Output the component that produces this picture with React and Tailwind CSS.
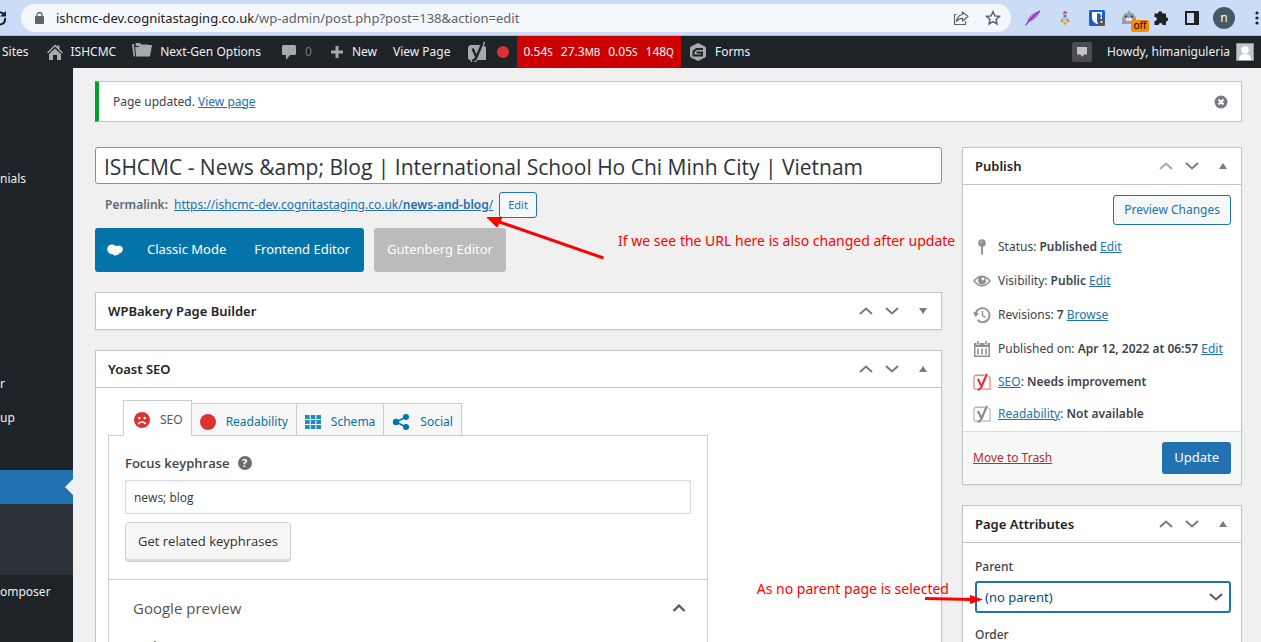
import React from "react";

const SANS = "font-['Noto_Sans',sans-serif]";
const OPEN = "font-['Open_Sans','Noto_Sans',sans-serif]";

function Chevron({ up, className = "" }) {
  return (
    <svg viewBox="0 0 14 8" className={`h-2 w-3.5 fill-none stroke-current ${className}`} strokeWidth="2">
      <path d={up ? "M1 7 L7 1.5 L13 7" : "M1 1 L7 6.5 L13 1"} />
    </svg>
  );
}

function YoastMark({ className = "", filled }) {
  return (
    <svg viewBox="0 0 20 20" className={className}>
      {filled ? (
        <path d="M4.500 3H15l4 2v13H3a2 2 0 0 1-2-2V6a3 3 0 0 1 3.500-3z" fill="currentColor" />
      ) : (
        <path
          d="M13 2.500H4A3 3 0 0 0 1 5.500v10A2.500 2.500 0 0 0 3.500 18H5M17 3.500A2.500 2.500 0 0 1 19 6v12H10"
          fill="none"
          stroke="currentColor"
          strokeWidth="1.400"
          opacity="0.6"
        />
      )}
      {filled && <path d="M17.500 0L10.500 16.500C9.500 19 8 20 4.500 20v-3" fill="none" stroke="currentColor" strokeWidth="1.600" />}
      <path
        d="M5.500 6.500l3.500 7.500M15.500 1L9.500 15C8.700 17.300 7.800 18.600 5 18.600"
        fill="none"
        stroke={filled ? "#1d2327" : "currentColor"}
        strokeWidth="2.400"
      />
    </svg>
  );
}

function BrowserBar() {
  return (
    <div className="flex h-9 shrink-0 items-center border-b border-[#a9b8d3] bg-[#cbdcf7]">
      <button aria-label="Reload" className="h-7 w-[21px] shrink-0 overflow-hidden text-[#202124]">
        <svg viewBox="0 0 21 28" className="h-7 w-[21px] fill-none stroke-current" strokeWidth="2">
          <path d="M-5 10A6 6 0 0 1 4.500 11M5 14A5.500 5.500 0 0 1-5 18" />
          <path d="M6 7v5.500H0z" fill="currentColor" stroke="none" />
        </svg>
      </button>
      <div className="flex h-7 min-w-0 flex-1 items-center rounded-full bg-[#f4f8fd] pl-3.5 pr-2.5 text-[#5f6368]">
        <svg viewBox="0 0 9 12" className="h-3 w-[9px] shrink-0">
          <rect y="4" width="9" height="8" rx="1" fill="currentColor" />
          <path d="M2 5V3a2.500 2.500 0 0 1 5 0v2" fill="none" stroke="currentColor" strokeWidth="1.300" />
        </svg>
        <span className="ml-3 min-w-0 flex-1 truncate text-[13px] leading-5">
          <span className="text-[#202124]">ishcmc-dev.cognitastaging.co.uk</span>/wp-admin/post.php?post=138&amp;action=edit
        </span>
        <button aria-label="Share" className="mr-4">
          <svg viewBox="0 0 16 16" className="size-4 fill-none stroke-current" strokeWidth="1.200" strokeLinejoin="round">
            <path d="M3.500 4.500h-2v10h11V11M9.500 2l5.500 4.500L9.500 11V8.300C7 8.300 5 9 3.500 11.500 4 7.500 6 5 9.500 4.500z" />
          </svg>
        </button>
        <button aria-label="Bookmark">
          <svg viewBox="0 0 16 16" className="size-4 fill-none stroke-current" strokeWidth="1.500">
            <path d="M8 1.700l1.900 4.200 4.600.5-3.400 3.100.9 4.500L8 11.700 4 14l.9-4.500L1.500 6.400l4.600-.5z" />
          </svg>
        </button>
      </div>
      <div className="flex shrink-0 items-center pl-3.5">
        <button aria-label="Feather extension" className="mr-4">
          <svg viewBox="0 0 16 16" className="size-4">
            <path d="M15.500.5C9 2 3 6 2 12.500 8 11.500 13 7 15.500.5z" fill="#b56bd6" />
            <path d="M.5 15.500C4 10.500 8 6 15 1" fill="none" stroke="#7d35a3" strokeWidth="1.200" />
          </svg>
        </button>
        <button aria-label="Rocket extension" className="mr-4">
          <svg viewBox="0 0 16 16" className="size-4">
            <path d="M6 4h4v7H6z" fill="#b9c3cf" />
            <path d="M5.500 3.500Q8-1.500 10.500 3.500z" fill="#d73b3b" />
            <circle cx="8" cy="6" r="1.300" fill="#3b7dc4" />
            <path d="M5.500 7.500L3.500 12h2.500zM10.500 7.500l2 4.500H10z" fill="#d76a5b" />
            <path d="M6 12h4l-2 4z" fill="#f6a623" />
          </svg>
        </button>
        <button aria-label="Password manager" className="mr-4">
          <svg viewBox="0 0 16 16" className="size-4">
            <rect width="16" height="16" rx="1.500" fill="#175ddc" />
            <path d="M3 2h10v6c0 3-2.500 5-5 6-2.500-1-5-3-5-6z" fill="#fff" />
            <path d="M8 3.500h3.500V8c0 2-1.500 3.500-3.500 4.500z" fill="#175ddc" />
            <rect x="9" y="9" width="7" height="6.500" rx="1" fill="#555" />
            <path d="M10.500 9V8a2 2 0 0 1 4 0v1" stroke="#555" fill="none" />
            <circle cx="12.500" cy="12" r="1" fill="#fff" />
          </svg>
        </button>
        <button aria-label="Cat extension, off" className="relative mr-4 w-4">
          <svg viewBox="0 0 16 16" className="size-4">
            <path d="M1 14V8L4 3.500 6.500 3 8 0l2 3 2.500.5L15 8v6z" fill="#9b9fa3" />
            <path d="M5 8h6v3H5z" fill="#e6e6e6" />
            <circle cx="5" cy="6.500" r="1" fill="#333" />
            <circle cx="11" cy="6.500" r="1" fill="#333" />
          </svg>
          <span className="absolute -right-3 top-2.5 h-3 w-[18px] rounded-xs bg-[#ff8c00] text-center text-[10px] leading-[11px] text-black">off</span>
        </button>
        <button aria-label="Extensions" className="mr-4">
          <svg viewBox="0 0 16 16" className="size-4 fill-[#202124]">
            <path d="M5 3.500a2.200 2.200 0 0 1 4.400 0H13v3.700h.4a2.200 2.200 0 0 1 0 4.300H13V15H9.600a2 2 0 0 0-4 0H1.500v-4h.4a2 2 0 0 0 0-4h-.4V3.500z" />
          </svg>
        </button>
        <button aria-label="Side panel" className="mr-3.5">
          <svg viewBox="0 0 14 14" className="size-3.5">
            <path d="M0 0h14v14H0zM2 2v10h7V2z" fillRule="evenodd" fill="#202124" />
          </svg>
        </button>
        <button aria-label="Profile" className="mr-4 size-[22px] rounded-full bg-[#455a64] text-center text-xs leading-5 text-white">n</button>
        <button aria-label="Browser menu" className="w-2.5 overflow-hidden">
          <svg viewBox="0 0 10 16" className="h-4 w-2.5 fill-[#202124]">
            <circle cx="6" cy="3" r="1.600" />
            <circle cx="6" cy="8" r="1.600" />
            <circle cx="6" cy="13" r="1.600" />
          </svg>
        </button>
      </div>
    </div>
  );
}

function AdminBar() {
  return (
    <nav className="flex h-8 shrink-0 items-center whitespace-nowrap bg-[#1d2327] text-[12px] leading-8 text-[#f0f0f1]">
      <a href="#sites" className="pl-0.5">Sites</a>
      <a href="#home" className="ml-[18px] flex items-center gap-2">
        <svg viewBox="0 0 16 16" className="size-4 fill-[#a7aaad]">
          <path d="M8 .5l2 2V1.500h2.500v3.500L16 8.500l-1 1-7-7-7 7-1-1z" />
          <path d="M8 4.500L14 10v6h-4v-5H6v5H2v-6z" />
        </svg>
        ISHCMC
      </a>
      <a href="#nextgen" className="ml-4 flex items-center gap-2">
        <svg viewBox="0 0 20 16" className="mb-1 h-4 w-5 fill-[#a7aaad]">
          <path d="M0 2h2l1 12.500H1.500zM3.500 1H8l1 1.500h7V4H3.800zM3.300 5h3l1.500-1h4L13 3h7l-2 11.500H4z" />
        </svg>
        Next-Gen Options
      </a>
      <a href="#comments" className="ml-5 flex items-center gap-2 text-[#a7aaad]">
        <svg viewBox="0 0 16 16" className="size-4 fill-current">
          <path d="M2.500 1h11A1.500 1.500 0 0 1 15 2.500v7a1.500 1.500 0 0 1-1.500 1.500H9l-4 5v-5H2.500A1.500 1.500 0 0 1 1 9.500v-7A1.500 1.500 0 0 1 2.500 1z" />
        </svg>
        <span className="text-[#72777c]">0</span>
      </a>
      <a href="#new" className="ml-[18px] flex items-center gap-2">
        <svg viewBox="0 0 14 14" className="size-3.5 fill-[#a7aaad]"><path d="M5.500 1h3v4.500H13v3H8.500V13h-3V8.500H1v-3h4.500z" /></svg>
        New
      </a>
      <a href="#view" className="ml-4">View Page</a>
      <a href="#yoast" className="ml-4 flex items-center gap-2.5">
        <YoastMark filled className="size-5 text-[#a7aaad]" />
        <span className="size-3 rounded-full bg-[#dc3232]" />
      </a>
      <a href="#monitor" className="ml-2 flex items-center gap-2 bg-[#cc0000] px-[7px] text-white">
        <span>0.54<span className="text-[10px]">S</span></span>
        <span>27.3<span className="text-[10px]">MB</span></span>
        <span>0.05<span className="text-[10px]">S</span></span>
        <span>148<span className="text-[10px]">Q</span></span>
      </a>
      <a href="#forms" className="ml-2 flex items-center gap-2">
        <svg viewBox="0 0 18 20" className="h-5 w-[18px]">
          <path d="M9 1l7 3.500q1 .5 1 2v7q0 1.500-1 2L9 19l-7-3.500q-1-.5-1-2v-7q0-1.500 1-2z" fill="#a7aaad" />
          <path d="M14 7H7.500L4.500 9.500v4h8.500V10.500H7.500" fill="none" stroke="#1d2327" strokeWidth="2" />
        </svg>
        Forms
      </a>
      <div className="ml-auto flex items-center pr-[7px]">
        <button aria-label="Messages" className="mr-[15px] flex size-5 items-center justify-center rounded-xs bg-[#4b4d50]">
          <svg viewBox="0 0 12 12" className="size-3 fill-[#c3c4c7]"><path d="M1 1h10v7.500H8L6 11 4.500 8.500H1z" /></svg>
        </button>
        <a href="#profile" className="flex items-center gap-1.5">
          Howdy, himaniguleria
          <svg viewBox="0 0 18 18" className="size-[18px]">
            <rect x=".5" y=".5" width="17" height="17" fill="#c5c5c5" stroke="#8c8f94" />
            <circle cx="9" cy="7" r="3.800" fill="#fff" />
            <path d="M3 17c0-4 2-6 6-6s6 2 6 6z" fill="#fff" />
          </svg>
        </a>
      </div>
    </nav>
  );
}

function Sidebar() {
  return (
    <aside className="w-[73px] shrink-0 overflow-hidden bg-[#1d2327] text-[12px] leading-[34px] text-[#f0f0f1]">
      <ul className="pt-[94px]">
        <li><a href="#testimonials">nials</a></li>
        <li className="mt-[171px]"><a href="#r">r</a></li>
        <li><a href="#up">up</a></li>
        <li className="mt-[35px]">
          <a href="#pages" aria-label="Pages" className="flex h-[34px] items-center justify-end bg-[#2271b1]">
            <svg viewBox="0 0 8 16" className="h-4 w-2 fill-[#f0f0f1]"><path d="M8 0v16L0 8z" /></svg>
          </a>
          <div className="h-[71px] bg-[#2c3338]" />
        </li>
        <li><a href="#composer">omposer</a></li>
      </ul>
    </aside>
  );
}

function Box({ title, collapsed, dimUp, children }) {
  return (
    <section className="border border-[#c3c4c7] bg-white shadow-xs">
      <header className={`flex h-9 items-center pl-3 text-[#787c82] ${collapsed ? "" : "box-content border-b border-[#c3c4c7]"}`}>
        <h2 className="flex-1 text-[13px] font-semibold leading-5 text-[#1d2327]">{title}</h2>
        <button aria-label={`Move ${title} up`} className={`flex w-[26px] justify-center ${dimUp ? "text-[#a7aaad]" : ""}`}><Chevron up /></button>
        <button aria-label={`Move ${title} down`} className="flex w-[26px] justify-center"><Chevron /></button>
        <button aria-label={`Toggle ${title}`} className="flex w-9 justify-center">
          <svg viewBox="0 0 8 6" className="h-1.5 w-2 fill-current"><path d={collapsed ? "M0 0h8L4 6z" : "M4 0l4 6H0z"} /></svg>
        </button>
      </header>
      {children}
    </section>
  );
}

const TAB = "flex h-8 items-center gap-2.5 border border-l-0 border-b-0 border-[#ccc] bg-[#f7f7f7] px-2 pt-1 text-[#0073aa]";

function YoastBox() {
  return (
    <Box title="Yoast SEO">
      <div className="px-3 pt-3">
        <div role="tablist" className="relative ml-[15px] flex items-end text-[12px] leading-5">
          <button role="tab" aria-selected="true" className="-mb-px flex h-9 items-center gap-2.5 border border-b-0 border-[#ccc] bg-white pl-2.5 pr-2 pt-0.5 text-[#555]">
            <svg viewBox="0 0 16 16" className="size-4">
              <circle cx="8" cy="8" r="8" fill="#dc3232" />
              <circle cx="5.300" cy="6" r="1.200" fill="#fff" />
              <circle cx="10.700" cy="6" r="1.200" fill="#fff" />
              <path d="M4 12q4-4 8 0" fill="none" stroke="#fff" strokeWidth="1.500" />
            </svg>
            SEO
          </button>
          <button role="tab" className={TAB}>
            <span className="size-4 rounded-full bg-[#dc3232]" />
            Readability
          </button>
          <button role="tab" className={TAB}>
            <svg viewBox="0 0 16 14" className="h-3.5 w-4 fill-[#1e8cbe]">
              <path d="M0 0h4.600v4H0zM5.700 0h4.600v4H5.700zM11.400 0H16v4h-4.600zM0 5h4.600v4H0zM5.700 5h4.600v4H5.700zM11.400 5H16v4h-4.600zM0 10h4.600v4H0zM5.700 10h4.600v4H5.700zM11.400 10H16v4h-4.600z" />
            </svg>
            Schema
          </button>
          <button role="tab" className={TAB}>
            <svg viewBox="0 0 18 16" className="h-4 w-[18px] fill-[#0073aa]">
              <path d="M4 8l10-5M4 8l10 5" stroke="#0073aa" strokeWidth="1.500" />
              <circle cx="4" cy="8" r="3.200" />
              <circle cx="14" cy="3" r="3" />
              <circle cx="14" cy="13" r="3" />
            </svg>
            Social
          </button>
        </div>
        <div className={`max-w-[600px] border border-[#ccc] pb-6 ${OPEN}`}>
          <div className="border-b border-[#ccc] px-4 pb-[17px] pt-[17px]">
            <div className="flex items-center gap-2 leading-5">
              <label htmlFor="keyphrase" className="text-[13px] font-semibold text-[#444]">Focus keyphrase</label>
              <button aria-label="Help" className="size-3.5 rounded-full bg-[#6d6d6d] text-center text-[11px] font-bold leading-3.5 text-white">?</button>
            </div>
            <input
              id="keyphrase"
              defaultValue="news; blog"
              className="mt-[7px] block h-[34px] w-full border border-[#ddd] px-2 text-[12px] text-[#32373c] shadow-[inset_0_1px_3px_#00000012]"
            />
            <button className="mt-2 h-10 rounded-sm border border-[#ccc] bg-[#f7f7f7] px-3 text-[13px] text-[#303030] shadow-[inset_0_-2px_0_#ddd]">
              Get related keyphrases
            </button>
          </div>
          <button className="flex w-full items-center justify-between py-4 pl-6 pr-[21px] text-[15px] leading-6 text-[#555]">
            Google preview
            <svg viewBox="0 0 14 8" className="h-2 w-3.5 fill-none stroke-current" strokeWidth="2.200"><path d="M1.500 7L7 1.500 12.500 7" /></svg>
          </button>
          <p className="px-4 text-[13px] font-semibold leading-5 text-[#444]">Preview as:</p>
        </div>
      </div>
    </Box>
  );
}

const LINK = "text-[#2271b1] underline";

function Status({ icon, children, link, tight }) {
  return (
    <li className={`flex items-center gap-[7px] whitespace-nowrap ${tight ? "h-8" : "h-[34px]"}`}>
      <span className="flex w-[18px] shrink-0 justify-center text-[#8c8f94]">{icon}</span>
      <span>{children}{link && <> <a href="#edit" className={LINK}>{link}</a></>}</span>
    </li>
  );
}

function PublishBox() {
  return (
    <Box title="Publish" dimUp>
      <div className="flex justify-end px-2.5 pt-2.5">
        <button className="h-[30px] rounded-[3px] border border-[#2271b1] bg-[#f6f7f7] px-2.5 text-[12px] text-[#2271b1]">Preview Changes</button>
      </div>
      <ul className="px-2.5 pt-[5px] text-[12px] leading-5 text-[#3c434a] [&_b]:font-semibold">
        <Status link="Edit" icon={
          <svg viewBox="0 0 10 18" className="h-4 w-2.5 fill-current"><circle cx="5" cy="4.500" r="4.300" /><path d="M4 8h2.200v9L5 18l-1-1z" /><circle cx="4" cy="3.500" r="1.200" fill="#c3c4c7" /></svg>
        }>Status: <b>Published</b></Status>
        <Status link="Edit" icon={
          <svg viewBox="0 0 18 12" className="h-3 w-[18px]"><path d="M1 6q8-9.500 16 0-8 9.500-16 0z" fill="none" stroke="currentColor" strokeWidth="1.400" /><circle cx="9" cy="5.500" r="4" fill="currentColor" /><circle cx="10" cy="4" r="1.400" fill="#fff" /></svg>
        }>Visibility: <b>Public</b></Status>
        <Status link="Browse" icon={
          <svg viewBox="0 0 18 18" className="size-[18px] fill-none stroke-current" strokeWidth="1.800"><path d="M2.500 9a7 7 0 1 1 2 5" /><path d="M9.500 5v4.500l3 2" strokeWidth="1.500" /><path d="M0 6l2.500 5L6 7.500z" fill="currentColor" stroke="none" /></svg>
        }>Revisions: <b>7</b></Status>
        <Status link="Edit" icon={
          <svg viewBox="0 0 16 16" className="size-4"><path d="M0 2h16v14H0zM1.500 6v8.500h13V6z" fillRule="evenodd" fill="currentColor" /><path d="M4 0v4M12 0v4" stroke="#fff" strokeWidth="3" /><path d="M4 0v3.500M12 0v3.500M4 7.500v6M8 7.500v6M12 7.500v6" stroke="currentColor" strokeWidth="1.600" /></svg>
        }>Published on: <b>Apr 12, 2022 at 06:57</b></Status>
        <Status tight icon={<YoastMark className="size-[18px] shrink-0 text-[#dc3232]" />}>
          <a href="#seo" className={LINK}>SEO</a>: <b>Needs improvement</b>
        </Status>
        <Status tight icon={<YoastMark className="size-[18px] shrink-0 text-[#888]" />}>
          <a href="#readability" className={LINK}>Readability</a>: <b>Not available</b>
        </Status>
      </ul>
      <div className="mt-px flex items-center justify-between border-t border-[#dcdcde] bg-[#f6f7f7] p-2.5 text-[12px]">
        <a href="#trash" className="text-[#b32d2e] underline">Move to Trash</a>
        <button className="h-8 rounded-[3px] bg-[#2271b1] px-3 text-[13px] text-white">Update</button>
      </div>
    </Box>
  );
}

function AttributesBox() {
  return (
    <Box title="Page Attributes">
      <div className="pb-6 pl-3 pr-2.5 pt-3.5 text-[12px] leading-5 text-[#3c434a]">
        <label htmlFor="parent" className="block font-medium">Parent</label>
        <div className="relative mt-1 flex items-center">
          <select id="parent" className="h-8 w-full appearance-none rounded-[3px] border-2 border-[#2271b1] bg-white pl-2 pr-6 text-[13px] text-[#0a4b78]">
            <option>(no parent)</option>
          </select>
          <Chevron className="pointer-events-none absolute right-2 text-[#50575e]" />
        </div>
        <label htmlFor="order" className="mt-3 block font-medium">Order</label>
        <input id="order" defaultValue="0" className="mt-1 h-8 w-12 rounded-[3px] border border-[#8c8f94] px-2" />
      </div>
    </Box>
  );
}

const NOTE = "pointer-events-none absolute whitespace-nowrap text-[14px] leading-5 text-[#ff0000]";

export default function App() {
  return (
    <div className={`relative flex h-screen flex-col overflow-hidden bg-[#f0f0f1] ${SANS}`}>
      <BrowserBar />
      <AdminBar />
      <div className="flex min-h-0 flex-1">
        <Sidebar />
        <main className="min-w-0 flex-1 overflow-hidden pl-[22px] pr-[19px] pt-[13px]">
          <div className="flex h-[41px] items-center border border-l-4 border-[#c3c4c7] border-l-[#00a32a] bg-white pl-3.5 pr-3 text-[12px] text-[#3c434a]">
            <p className="flex-1">Page updated. <a href="#page" className={LINK}>View page</a></p>
            <button aria-label="Dismiss">
              <svg viewBox="0 0 16 16" className="size-4"><circle cx="8" cy="8" r="6.500" fill="#787c82" /><path d="M5.500 5.500l5 5M10.500 5.500l-5 5" stroke="#fff" strokeWidth="2" /></svg>
            </button>
          </div>
          <div className="mt-[25px] flex items-start gap-5">
            <div className="min-w-0 flex-1">
              <input
                aria-label="Title"
                defaultValue="ISHCMC - News &amp;amp; Blog | International School Ho Chi Minh City | Vietnam"
                className={`block h-[37px] w-full rounded-[3px] border border-[#8c8f94] bg-white px-2 pt-0.5 text-[21px] text-[#2c3338] ${OPEN}`}
              />
              <div className="mt-2 flex h-[26px] items-center gap-1.5 pl-2.5 text-[12px] text-[#646970]">
                <span className="font-semibold">Permalink:</span>
                <a href="#permalink" className={LINK}>https://ishcmc-dev.cognitastaging.co.uk/<b className="font-semibold">news-and-blog</b>/</a>
                <button className="h-[26px] rounded-[3px] border border-[#2271b1] bg-[#f6f7f7] px-2 text-[11px] text-[#2271b1]">Edit</button>
              </div>
              <div className="mt-2.5 flex gap-2.5 text-[13px] text-white">
                <div className="flex h-11 items-center rounded-[3px] bg-[#0473aa]">
                  <svg viewBox="0 0 16 12" className="ml-3 mr-2.5 h-3 w-4 fill-white"><path d="M4.500.5a4 4 0 0 1 4 1.500Q10 1.500 11 2q2-1 3.500.500Q16 3.500 15.800 5.500 15.500 9 12 9.500q-.5 2-2.500 1.500-2 1.500-3-.5Q.2 10 .2 5 .5 1 4.500.5z" /></svg>
                  <button className="px-3.5">Classic Mode</button>
                  <button className="px-3.5">Frontend Editor</button>
                </div>
                <button className="h-11 rounded-[3px] bg-[#bbb] px-[13px]">Gutenberg Editor</button>
              </div>
              <div className="mt-5 flex flex-col gap-5">
                <Box title="WPBakery Page Builder" collapsed />
                <YoastBox />
              </div>
            </div>
            <div className="flex w-[280px] shrink-0 flex-col gap-5">
              <PublishBox />
              <AttributesBox />
            </div>
          </div>
        </main>
      </div>

      <svg viewBox="0 0 120 44" className="pointer-events-none absolute left-[486px] top-[216px] h-11 w-[120px]">
        <path d="M12 5.500L117.500 42" stroke="#f00" strokeWidth="3" />
        <path d="M1 1.500L16 1.500 11 11z" fill="#f00" stroke="#f00" />
      </svg>
      <p className={`${NOTE} left-[618px] top-[231px]`}>If we see the URL here is also changed after update</p>
      <p className={`${NOTE} right-[312px] top-[579px]`}>As no parent page is selected</p>
      <svg viewBox="0 0 60 12" className="pointer-events-none absolute right-[277px] top-[593px] h-3 w-[60px]">
        <path d="M1 5.500L48 6.500" stroke="#f00" strokeWidth="3" />
        <path d="M46 2l13 4.500L46 11z" fill="#f00" />
      </svg>
    </div>
  );
}
